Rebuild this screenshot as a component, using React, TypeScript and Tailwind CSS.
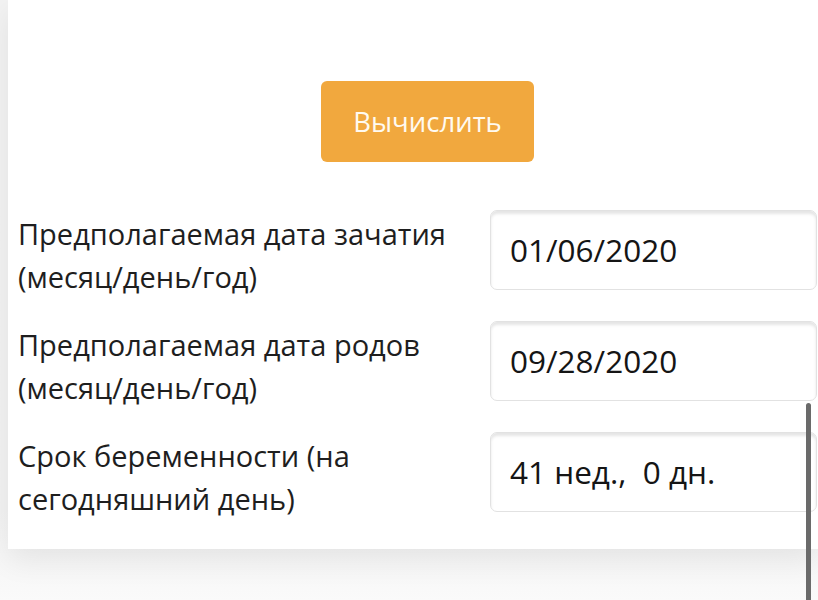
import React from "react";

const rows = [
  { label: ["Предполагаемая дата зачатия", "(месяц/день/год)"], value: "01/06/2020" },
  { label: ["Предполагаемая дата родов", "(месяц/день/год)"], value: "09/28/2020" },
  { label: ["Срок беременности (на", "сегодняшний день)"], value: "41 нед.,  0 дн." },
];

export default function App() {
  return (
    <main
      className="relative h-[600px] w-[818px] overflow-hidden bg-gradient-to-b from-[#f2f2f2] from-85% to-[#fafafa]"
      style={{ fontFamily: '"Open Sans", "Noto Sans", sans-serif' }}
    >
      {/* Calculator card */}
      <div className="ml-[8px] bg-white pl-[10px] pr-px pt-[81px] pb-[29px] shadow-[0_12px_28px_rgba(0,0,0,0.07)]">
        <div className="flex justify-center pl-[20px]">
          <button className="h-[81px] w-[213px] rounded-[6px] bg-[#f1a83e] text-[27.5px] text-[#fffaf0]">
            Вычислить
          </button>
        </div>

        <div className="mt-[48px] flex flex-col gap-[23px]">
          {rows.map((row) => (
            <div key={row.value} className="flex items-start justify-between">
              <div className="mt-[2px] text-[29px] leading-[43px] text-[#1e1e1e]">
                <div>{row.label[0]}</div>
                <div>{row.label[1]}</div>
              </div>
              <div className="flex h-[80px] w-[327px] items-center rounded-[7px] border border-[#e2e2e2] pl-[19px] text-[31.5px] whitespace-pre text-[#151515] shadow-[inset_0_3px_3px_rgba(0,0,0,0.1)]">
                {row.value}
              </div>
            </div>
          ))}
        </div>
      </div>

      {/* scrollbar thumb */}
      <div className="absolute right-[7px] top-[403px] h-[220px] w-[5px] rounded-t-full bg-[#6a6a6a]" />
    </main>
  );
}
